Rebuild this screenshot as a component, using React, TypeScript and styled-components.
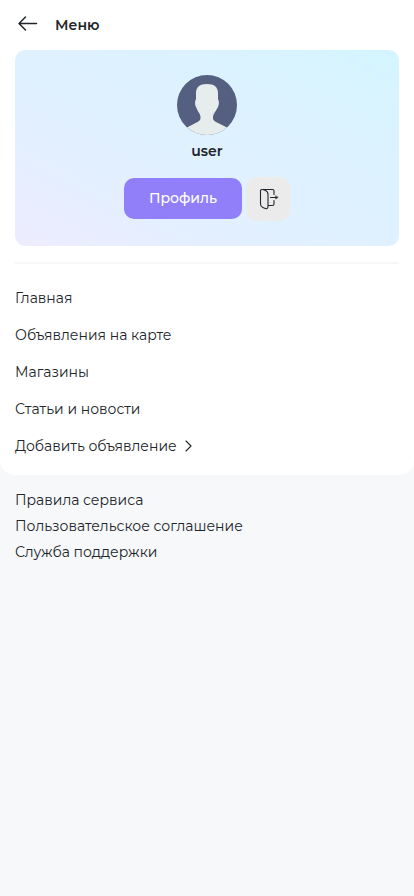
import React from 'react';
import styled, { createGlobalStyle } from 'styled-components';

const GlobalStyle = createGlobalStyle`
  *, *::before, *::after { box-sizing: border-box; }
  body {
    margin: 0;
    background: #f6f8fa;
    color: #212529;
    font: 400 14px/18px Montserrat, Inter, "Noto Sans", sans-serif;
  }
`;

const Panel = styled.div`
  padding: 0 15px 11px;
  background: #fff;
  border-radius: 0 0 15px 15px;
`;

const Header = styled.header`
  display: flex;
  align-items: center;
  gap: 15px;
  height: 50px;
`;

const BackButton = styled.button`
  display: flex;
  padding: 0 0 2px;
  border: 0;
  background: none;
  color: inherit;
  cursor: pointer;
`;

const Title = styled.h1`
  margin: 0;
  font-size: 14px;
  font-weight: 600;
`;

const ProfileCard = styled.section`
  display: flex;
  flex-direction: column;
  align-items: center;
  padding: 25px 15px;
  border-radius: 10px;
  background: linear-gradient(to top right, #eeecff 0%, #e4efff 25%, #dff1ff 50%, #dbf2ff 75%, #d3f5ff 100%);
`;

const Avatar = styled.svg`
  display: block;
  width: 60px;
  height: 60px;
`;

const UserName = styled.div`
  margin: 7px 0 17px;
  font-weight: 600;
`;

const Actions = styled.div`
  display: flex;
  align-items: center;
  gap: 4px;
`;

const ProfileButton = styled.button`
  width: 118px;
  height: 41px;
  margin-bottom: 2px;
  padding: 0;
  border: 0;
  border-radius: 10px;
  background: #917ffa;
  color: #fff;
  font: inherit;
  font-weight: 500;
  cursor: pointer;
`;

const LogoutButton = styled.button`
  display: flex;
  align-items: center;
  justify-content: center;
  width: 44px;
  height: 44px;
  padding: 0;
  border: 0;
  border-radius: 10px;
  background: #ebebeb;
  color: #22252b;
  cursor: pointer;
`;

const Divider = styled.hr`
  height: 2px;
  margin: 16px 0 15px;
  border: 0;
  background: #f6f7f9;
`;

const LinkList = styled.nav<{ $row: number }>`
  display: grid;
  grid-auto-rows: ${({ $row }) => $row}px;
`;

const MenuLink = styled.a`
  display: flex;
  align-items: center;
  gap: 8px;
  color: inherit;
  text-decoration: none;
`;

const Footer = styled.footer`
  padding: 12px 15px;
`;

const mainLinks = ['Главная', 'Объявления на карте', 'Магазины', 'Статьи и новости'];
const serviceLinks = ['Правила сервиса', 'Пользовательское соглашение', 'Служба поддержки'];

const ArrowLeft = () => (
  <svg width="25" height="20" viewBox="0 0 25 20" fill="none" stroke="currentColor" strokeWidth="1.5" strokeLinecap="round" strokeLinejoin="round" aria-hidden="true">
    <path d="M21.500 9.500H4M10.500 3L4 9.500l6.500 6.500" />
  </svg>
);

const LogoutIcon = () => (
  <svg width="22" height="24" viewBox="0 0 22 24" fill="none" stroke="currentColor" strokeWidth="1.1" strokeLinecap="round" strokeLinejoin="round" aria-hidden="true">
    <path d="M5.500 2.500H15.500c1 0 1.500.5 1.500 1.500v3.500M17 13.500V17c0 1-.5 1.500-1.500 1.500h-4" />
    <path d="M5.500 2.500C4.300 2.300 3.500 3 3.500 4v13c0 1.800.8 2.800 2.300 3.500l1.800.8c2 .9 3.400.1 3.400-1.800V7.300c0-2-.8-3.200-2.500-3.900l-1.800-.7z" />
    <path d="M13.500 10.500h6" />
    <path d="M18.700 8.900v3.200l2.300-1.600z" fill="currentColor" strokeWidth=".4" />
  </svg>
);

const ChevronRight = () => (
  <svg width="8" height="12" viewBox="0 0 8 12" fill="none" stroke="currentColor" strokeWidth="1.1" strokeLinecap="round" strokeLinejoin="round" aria-hidden="true">
    <path d="M1 1L6 6l-5 5" />
  </svg>
);

export default function App() {
  return (
    <>
      <GlobalStyle />
      <Panel>
        <Header>
          <BackButton type="button" aria-label="Назад"><ArrowLeft /></BackButton>
          <Title>Меню</Title>
        </Header>
        <ProfileCard>
          <Avatar viewBox="0 0 60 60" role="img" aria-label="user">
            <defs><clipPath id="avatar-circle"><circle cx="30" cy="30" r="30" /></clipPath></defs>
            <g clipPath="url(#avatar-circle)">
              <path fill="#556080" d="M0 0h60v60H0z" />
              <path fill="#e7eced" d="M30 9c-7.300 0-11 3.200-11 9v6.500c-1.300 1.300-1.200 5.500.3 8 .7 2.500 2.300 4.500 3.400 6.500.7 1.500.8 2.500.8 4 0 1.500-.6 2.600-2.500 3.700L10 52.500l-5 3V60h50v-4.500l-5-3-11.500-5.800c-1.900-1.100-2.500-2.200-2.500-3.700 0-1.500.1-2.500.8-4 1.100-2 2.700-4 3.900-6.500 1.500-2.500 1.600-6.700.3-8V18c0-5.800-3.700-9-11-9z" />
            </g>
          </Avatar>
          <UserName>user</UserName>
          <Actions>
            <ProfileButton type="button">Профиль</ProfileButton>
            <LogoutButton type="button" aria-label="Выйти"><LogoutIcon /></LogoutButton>
          </Actions>
        </ProfileCard>
        <Divider />
        <LinkList $row={37} aria-label="Меню">
          {mainLinks.map((label) => <MenuLink href="#" key={label}>{label}</MenuLink>)}
          <MenuLink href="#">Добавить объявление <ChevronRight /></MenuLink>
        </LinkList>
      </Panel>
      <Footer>
        <LinkList $row={26} aria-label="Сервис">
          {serviceLinks.map((label) => <MenuLink href="#" key={label}>{label}</MenuLink>)}
        </LinkList>
      </Footer>
    </>
  );
}
